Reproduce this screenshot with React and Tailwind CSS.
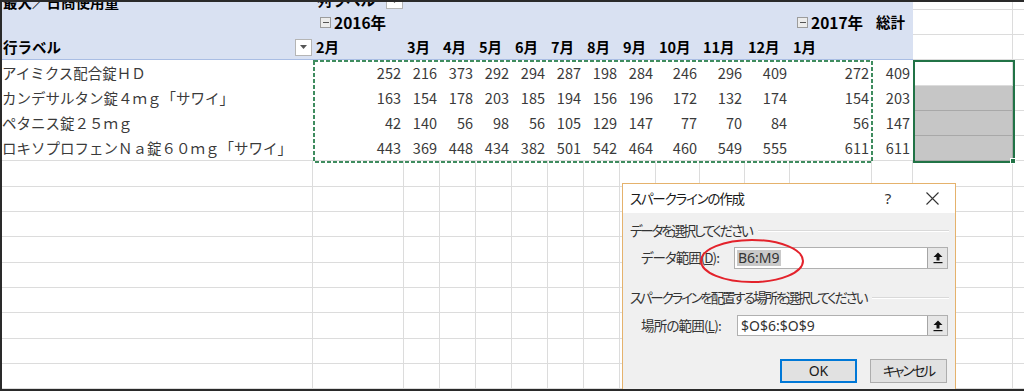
import React from "react";

const F = "font-['Noto_Sans_CJK_JP',sans-serif]";
const COLS = [311, 91, 36, 36, 36, 36, 36, 36, 36, 44, 45, 45, 82, 41, 100, 24];
const ROWS = [25, 25, 25, 26, 25, 25, 25, 26, 25, 25, 26, 25, 25, 26, 25, 25];

const data = [
  ["アイミクス配合錠ＨＤ", [252, 216, 373, 292, 294, 287, 198, 284, 246, 296, 409, 272], 409],
  ["カンデサルタン錠４ｍｇ「サワイ」", [163, 154, 178, 203, 185, 194, 156, 196, 172, 132, 174, 154], 203],
  ["ペタニス錠２５ｍｇ", [42, 140, 56, 98, 56, 105, 129, 147, 77, 70, 84, 56], 147],
  ["ロキソプロフェンＮａ錠６０ｍｇ「サワイ」", [443, 369, 448, 434, 382, 501, 542, 464, 460, 549, 555, 611], 611],
];
const months = ["2月", "3月", "4月", "5月", "6月", "7月", "8月", "9月", "10月", "11月", "12月", "1月"];

function Dropdown() {
  return (
    <div className="w-[17px] h-[17px] bg-white border border-[#b5b5b5] flex items-center justify-center shrink-0">
      <svg width="7" height="4" viewBox="0 0 7 4">
        <path d="M0 0 H7 L3.5 4 Z" fill="#555" />
      </svg>
    </div>
  );
}

function Collapse() {
  return (
    <div className="w-[11px] h-[11px] border border-[#9c9c9c] bg-[#ececec] flex items-center justify-center shrink-0 mr-[3px]">
      <div className="w-[6px] h-px bg-[#555]" />
    </div>
  );
}

function cellContent(r, c) {
  const num = "w-full text-right pr-[3px] text-[14.5px] text-[#3a3a3a] leading-none";
  const head = "font-bold text-[14.5px] text-black leading-none whitespace-nowrap";
  if (r === 0) {
    if (c === 0)
      return <span className={head + " pl-[1px]"}>最大／日商使用量</span>;
    if (c === 1)
      return (
        <div className="flex w-full items-center justify-between pl-[4px] pr-[1px]">
          <span className={head}>列ラベル</span>
          <Dropdown />
        </div>
      );
    return null;
  }
  if (r === 1) {
    if (c === 1 || c === 12)
      return (
        <div className="flex items-center pl-[7px]">
          <Collapse />
          <span className={head + " text-[15.5px]"}>{c === 1 ? "2016年" : "2017年"}</span>
        </div>
      );
    if (c === 13) return <span className={head + " pl-[4px]"}>総計</span>;
    return null;
  }
  if (r === 2) {
    if (c === 0)
      return (
        <div className="flex w-full items-center justify-between pl-[1px] pr-[1px]">
          <span className={head}>行ラベル</span>
          <Dropdown />
        </div>
      );
    if (c >= 1 && c <= 12) return <span className={head + " pl-[3px]"}>{months[c - 1]}</span>;
    return null;
  }
  if (r >= 3 && r <= 6) {
    const d = data[r - 3];
    if (c === 0)
      return <span className="text-[14.5px] text-[#3a3a3a] leading-none whitespace-nowrap">{d[0]}</span>;
    if (c >= 1 && c <= 12) return <span className={num}>{d[1][c - 1]}</span>;
    if (c === 13) return <span className={num + " pr-[2px]"}>{d[2]}</span>;
  }
  return null;
}

function cellClass(r, c) {
  const grid = "border-r border-b border-[#dcdcdc]";
  if (r <= 2 && c <= 13) {
    return "bg-[#d9e1f2]" + (r === 2 ? " border-b border-[#a9bde4]" : "");
  }
  if (r >= 3 && r <= 6 && c <= 13) {
    return "bg-white" + (r === 6 ? " border-b border-[#dcdcdc]" : "");
  }
  if (c === 14 && r >= 4 && r <= 6) {
    return "bg-[#c6c6c6] border-r border-b border-[#a8a8a8]";
  }
  return "bg-white " + grid;
}

function UploadBtn() {
  return (
    <div className="w-[20px] h-full border-l border-[#a5a5a5] bg-[#e6e6e6] flex items-center justify-center shrink-0">
      <svg width="10" height="12" viewBox="0 0 10 12">
        <path d="M5 0.5 L9.5 5 H6.5 V8.5 H3.5 V5 H0.5 Z" fill="#111" />
        <rect x="0.5" y="10" width="9" height="1.2" fill="#111" />
      </svg>
    </div>
  );
}

export default function App() {
  return (
    <div className={`relative w-[1024px] h-[391px] overflow-hidden bg-white border-t-2 border-l-2 border-b-2 border-[#2a2a2a] ${F}`}>
      <div className="flex flex-col -mt-[17px]">
        {ROWS.map((h, r) => (
          <div key={r} className="flex shrink-0" style={{ height: h }}>
            {COLS.map((w, c) => (
              <div
                key={c}
                className={`shrink-0 h-full flex items-center overflow-hidden ${cellClass(r, c)} ${r === 0 ? "items-end pb-[1px]" : ""}`}
                style={{ width: w }}
              >
                {cellContent(r, c)}
              </div>
            ))}
          </div>
        ))}
      </div>

      {/* copy marquee */}
      <svg className="absolute left-[311px] top-[58px]" width="560" height="103" viewBox="0 0 560 103">
        <rect x="1" y="1" width="558" height="101" fill="none" stroke="#3f8c5f" strokeWidth="2" strokeDasharray="4 2" />
      </svg>

      {/* selection */}
      <div className="absolute left-[911px] top-[58px] w-[102px] h-[103px] border-2 border-[#217346]" />
      <div className="absolute left-[1008px] top-[156px] w-[6px] h-[6px] bg-[#217346] border border-white" />

      {/* dialog */}
      <div className="absolute left-[620px] top-[181px] w-[334px] h-[220px] border border-[#e5b26c] bg-[#f0f0f0] [font-feature-settings:'palt'] text-[13.5px] text-[#1a1a1a]">
        <div className="h-[29px] bg-white flex items-center pl-[7px]">
          <span className="flex-1 leading-none tracking-[-1.2px]">スパークラインの作成</span>
          <span className="w-[10px] text-center leading-none text-[#333] text-[15px] font-['Noto_Sans',sans-serif]">?</span>
          <svg className="ml-[33px] mr-[16px]" width="13" height="13" viewBox="0 0 13 13">
            <path d="M0.5 0.5 L12.5 12.5 M12.5 0.5 L0.5 12.5" stroke="#333" strokeWidth="1.1" />
          </svg>
        </div>
        <div className="flex flex-col">
          <div className="flex items-center pl-[7px] pr-[6px] mt-[9px] h-[18px]">
            <span className="leading-none text-[#333] tracking-[-2.2px]">データを選択してください</span>
            <div className="flex-1 ml-[6px] flex flex-col">
              <div className="h-px bg-[#d9d9d9]" />
              <div className="h-px bg-white" />
            </div>
          </div>
          <div className="flex items-center mt-[7px] h-[22px]">
            <span className="w-[111px] pl-[18px] leading-none text-[#333] tracking-[-1px]">
              データ範囲(<span className="underline">D</span>):
            </span>
            <div className="w-[214px] h-[22px] border border-[#b0b0b0] bg-white flex items-center">
              <div className="flex-1 pl-[2px] flex items-center">
                <span className="bg-[#c9c9c9] text-[14px] leading-[16px] px-[1px] text-[#333] font-['Noto_Sans',sans-serif]">B6:M9</span>
              </div>
              <UploadBtn />
            </div>
          </div>
          <div className="flex items-center pl-[7px] pr-[6px] mt-[20px] h-[18px]">
            <span className="leading-none text-[#333] tracking-[-2.2px]">スパークラインを配置する場所を選択してください</span>
            <div className="flex-1 ml-[6px] flex flex-col">
              <div className="h-px bg-[#d9d9d9]" />
              <div className="h-px bg-white" />
            </div>
          </div>
          <div className="flex items-center mt-[8px] h-[21px]">
            <span className="w-[114px] pl-[18px] leading-none text-[#333] tracking-[-0.8px]">
              場所の範囲(<span className="underline">L</span>):
            </span>
            <div className="w-[211px] h-[21px] border border-[#b0b0b0] bg-white flex items-center">
              <div className="flex-1 pl-[3px] flex items-center">
                <span className="text-[14px] leading-[16px] text-[#333] font-['Noto_Sans',sans-serif]">$O$6:$O$9</span>
              </div>
              <UploadBtn />
            </div>
          </div>
          <div className="flex mt-[23px] pl-[157px] gap-[13px]">
            <div className="w-[77px] h-[24px] border-2 border-[#0078d7] bg-[#e1e1e1] flex items-center justify-center text-[14px] leading-none font-['Noto_Sans',sans-serif]">
              OK
            </div>
            <div className="w-[77px] h-[24px] border border-[#adadad] bg-[#e1e1e1] flex items-center justify-center leading-none tracking-[-2px]">
              キャンセル
            </div>
          </div>
        </div>
      </div>

      {/* red ellipse */}
      <svg className="absolute left-[696px] top-[234px]" width="110" height="50" viewBox="0 0 110 50">
        <ellipse cx="54" cy="25" rx="51" ry="21" fill="none" stroke="#e3222b" strokeWidth="2" />
      </svg>
    </div>
  );
}
